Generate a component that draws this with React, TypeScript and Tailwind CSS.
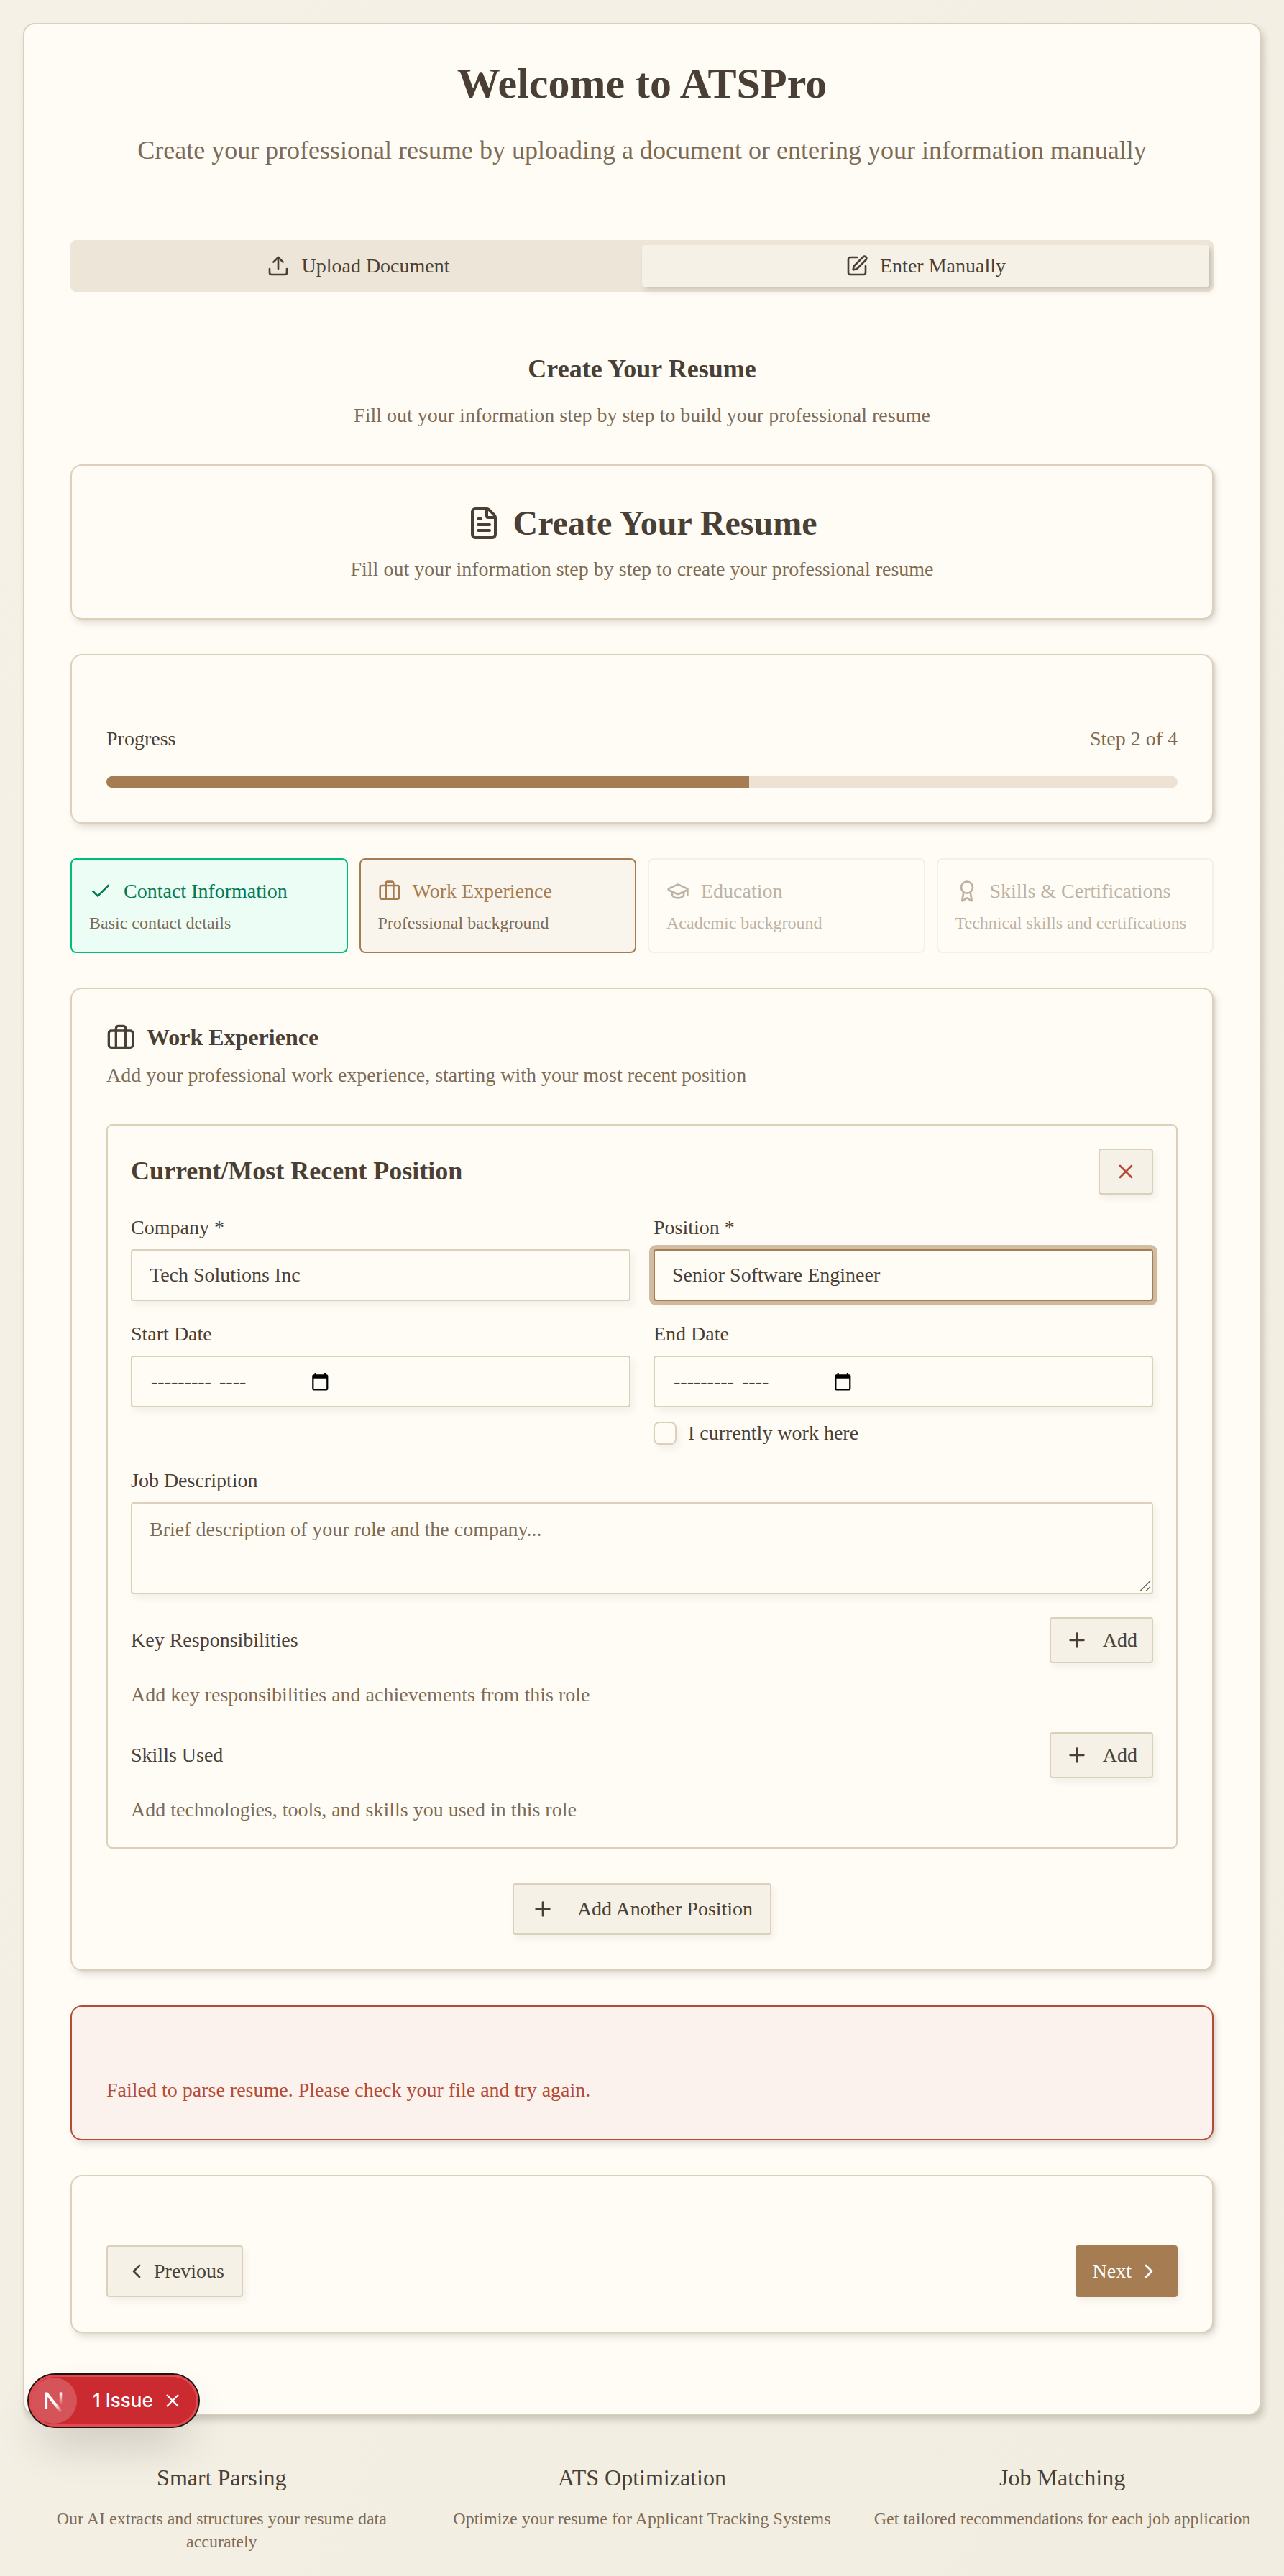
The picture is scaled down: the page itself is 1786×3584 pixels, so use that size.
import React from "react";
import {
  Award,
  Briefcase,
  Check,
  ChevronLeft,
  ChevronRight,
  FileText,
  GraduationCap,
  Plus,
  SquarePen,
  Upload,
  X,
} from "lucide-react";

const shadowXs = "shadow-[4px_6px_10px_0_rgba(58,51,44,0.06)]";
const shadowSm =
  "shadow-[4px_6px_10px_0_rgba(58,51,44,0.12),4px_2px_4px_-2px_rgba(58,51,44,0.12)]";
const shadowLg =
  "shadow-[4px_6px_10px_0_rgba(58,51,44,0.12),4px_8px_12px_-2px_rgba(58,51,44,0.12)]";

function Card({ className, children }: { className: string; children: React.ReactNode }) {
  return (
    <section className={`rounded-[16px] border-2 px-12 pb-12 ${shadowSm} ${className}`}>
      {children}
    </section>
  );
}

const plainCard = "border-[#dbd0ba] bg-[#fffcf5]";
const outlineButton = `flex items-center rounded-[4px] border-2 border-[#dbd0ba] bg-[#f5f1e6] ${shadowXs}`;
const fieldBox = `h-[72px] rounded-[4px] border-2 bg-[#fffcf5] px-6 flex items-center ${shadowXs}`;

function Label({ children }: { children: React.ReactNode }) {
  return <div className="text-[28px] leading-none">{children}</div>;
}

function MonthField() {
  return (
    <div className={`${fieldBox} border-[#dbd0ba]`}>
      <span className="ml-0.5 w-[95px] whitespace-nowrap">---------</span>
      <span className="w-[127px]">----</span>
      <svg viewBox="0 0 24 24" className="size-[26.6px] fill-black">
        <path d="M20 3h-1V1h-2v2H7V1H5v2H4c-1.1 0-2 .9-2 2v16c0 1.1.9 2 2 2h16c1.1 0 2-.9 2-2V5c0-1.1-.9-2-2-2zm0 18H4V8h16v13z" />
      </svg>
    </div>
  );
}

function AddRow({ title, hint }: { title: string; hint: string }) {
  return (
    <div>
      <div className="flex items-center justify-between">
        <Label>{title}</Label>
        <button className={`${outlineButton} h-16 gap-5 px-5`}>
          <Plus className="size-8" />
          Add
        </button>
      </div>
      <p className="mt-6 text-[#7d6b56]">{hint}</p>
    </div>
  );
}

const steps = [
  {
    title: "Contact Information",
    text: "Basic contact details",
    Icon: Check,
    box: "border-emerald-500 bg-emerald-50",
    tone: "text-emerald-700",
  },
  {
    title: "Work Experience",
    text: "Professional background",
    Icon: Briefcase,
    box: "border-[#a67c52] bg-[#a67c52]/5",
    tone: "text-[#a67c52]",
  },
  {
    title: "Education",
    text: "Academic background",
    Icon: GraduationCap,
    box: "border-[#ece5d8] opacity-50",
    tone: "text-[#7d6b56]",
  },
  {
    title: "Skills & Certifications",
    text: "Technical skills and certifications",
    Icon: Award,
    box: "border-[#ece5d8] opacity-50",
    tone: "text-[#7d6b56]",
  },
];

const features = [
  { title: "Smart Parsing", text: "Our AI extracts and structures your resume data accurately" },
  { title: "ATS Optimization", text: "Optimize your resume for Applicant Tracking Systems" },
  { title: "Job Matching", text: "Get tailored recommendations for each job application" },
];

function IssueBadge() {
  return (
    <div className="absolute left-10 top-[3304px] flex h-[72px] w-[236px] items-center rounded-full border-[3px] border-[#e5484d] bg-[#ca2a30] font-['Inter',sans-serif] text-white shadow-[0_0_0_2px_#171717,0_32px_64px_-16px_rgba(0,0,0,0.24)]">
      <div className="flex size-16 shrink-0 items-center justify-center rounded-full bg-white/20">
        <svg viewBox="0 0 26 30" className="mt-1 h-[30px] w-[26px]" fill="none">
          <defs>
            <linearGradient id="diag" x1="15" y1="18" x2="24" y2="29" gradientUnits="userSpaceOnUse">
              <stop stopColor="#fff" />
              <stop offset="1" stopColor="#fff" stopOpacity="0" />
            </linearGradient>
            <linearGradient id="stem" x1="0" y1="2" x2="0" y2="19" gradientUnits="userSpaceOnUse">
              <stop stopColor="#fff" />
              <stop offset="1" stopColor="#fff" stopOpacity="0" />
            </linearGradient>
          </defs>
          <path d="M2.5 1.5v23" stroke="#fff" strokeWidth="3.2" />
          <path d="M2.5 2.5l21 26.5" stroke="url(#diag)" strokeWidth="4" />
          <path d="M22.5 1.5v17" stroke="url(#stem)" strokeWidth="3.4" />
        </svg>
      </div>
      <span className="ml-[22px] w-[84px] whitespace-nowrap text-[26px] font-medium leading-none">1 Issue</span>
      <svg viewBox="0 0 18 18" className="ml-[18px] size-[18px] shrink-0" fill="none" stroke="#fff" strokeWidth="2.4">
        <path d="M1 1l16 16M17 1L1 17" />
      </svg>
    </div>
  );
}

export default function App() {
  return (
    <div className="relative h-[3584px] w-[1786px] overflow-hidden bg-gradient-to-br from-[#f5f1e6] to-[#f2ede1] p-8 font-['Liberation_Serif',serif] text-[28px] leading-[40px] text-[#4a3f35]">
      <main className={`h-[3328px] rounded-[16px] border-2 border-[#dbd0ba] bg-[#fffcf5] px-16 pt-[46px] ${shadowLg}`}>
        <header className="h-[254px] text-center">
          <h1 className="text-[60px] font-bold leading-[72px]">Welcome to ATSPro</h1>
          <p className="mt-[29px] text-[36px] leading-[56px] text-[#7d6b56]">
            Create your professional resume by uploading a document or entering your information manually
          </p>
        </header>

        <div className="grid h-[72px] grid-cols-2 items-center rounded-[8px] bg-[#ece5d8] p-1.5">
          <div className="flex h-[58px] items-center justify-center gap-4">
            <Upload className="size-8" />
            Upload Document
          </div>
          <div className={`flex h-[58px] items-center justify-center gap-4 rounded-[4px] bg-[#f5f1e6] ${shadowSm}`}>
            <SquarePen className="size-8" />
            Enter Manually
          </div>
        </div>

        <div className="mt-[79px] text-center">
          <h2 className="text-[36px] font-bold leading-[56px]">Create Your Resume</h2>
          <p className="mt-[17px] text-[#7d6b56]">
            Fill out your information step by step to build your professional resume
          </p>
        </div>

        <div className="mt-12 flex flex-col gap-12">
          <Card className={`${plainCard} pt-12 text-center`}>
            <h2 className="flex items-center justify-center gap-4 text-[48px] font-bold leading-[64px]">
              <FileText className="size-12" />
              Create Your Resume
            </h2>
            <p className="mt-3 text-[#7d6b56]">
              Fill out your information step by step to create your professional resume
            </p>
          </Card>

          <Card className={`${plainCard} pt-24`}>
            <div className="flex justify-between">
              <span>Progress</span>
              <span className="text-[#7d6b56]">Step 2 of 4</span>
            </div>
            <div className="mt-8 h-4 overflow-hidden rounded-[8px] bg-[#a67c52]/20">
              <div className="h-full w-[60%] bg-[#a67c52]" />
            </div>
          </Card>

          <div className="grid grid-cols-4 gap-4">
            {steps.map(({ title, text, Icon, box, tone }) => (
              <div key={title} className={`rounded-[8px] border-2 p-6 ${box}`}>
                <div className={`flex items-center gap-4 whitespace-nowrap ${tone}`}>
                  <Icon className="size-8" />
                  {title}
                </div>
                <p className="mt-2 whitespace-nowrap text-[24px] leading-[32px] text-[#7d6b56]">{text}</p>
              </div>
            ))}
          </div>

          <Card className={`${plainCard} pt-12`}>
            <h2 className="flex items-center gap-4 text-[32px] font-bold leading-none">
              <Briefcase className="size-10" />
              <span className="pb-0.5">Work Experience</span>
            </h2>
            <p className="mt-3 text-[#7d6b56]">
              Add your professional work experience, starting with your most recent position
            </p>

            <div className="mt-12 flex flex-col gap-8 rounded-[8px] border-2 border-[#dbd0ba] p-8">
              <div className="flex items-center justify-between">
                <h3 className="pb-0.5 text-[36px] font-bold">Current/Most Recent Position</h3>
                <button className={`${outlineButton} h-16 px-5 text-[#b54a35]`}>
                  <X className="size-8" />
                </button>
              </div>

              <div className="grid grid-cols-2 gap-8">
                <div className="flex flex-col gap-4">
                  <Label>Company *</Label>
                  <div className={`${fieldBox} border-[#dbd0ba]`}>Tech Solutions Inc</div>
                </div>
                <div className="flex flex-col gap-4">
                  <Label>Position *</Label>
                  <div className="flex h-[72px] items-center rounded-[4px] border-2 border-[#a67c52] bg-[#fffcf5] px-6 shadow-[0_0_0_6px_rgba(166,124,82,0.5),4px_6px_10px_0_rgba(58,51,44,0.06)]">
                    Senior Software Engineer
                  </div>
                </div>
                <div className="flex flex-col gap-4">
                  <Label>Start Date</Label>
                  <MonthField />
                </div>
                <div className="flex flex-col gap-4">
                  <Label>End Date</Label>
                  <MonthField />
                  <div className="flex h-10 items-center gap-4">
                    <span className={`size-8 rounded-[8px] border-2 border-[#dbd0ba] bg-[#fffcf5] ${shadowXs}`} />
                    I currently work here
                  </div>
                </div>
              </div>

              <div className="flex flex-col gap-4">
                <Label>Job Description</Label>
                <div
                  className={`relative h-32 rounded-[4px] border-2 border-[#dbd0ba] bg-[#fffcf5] px-6 py-4 text-[#7d6b56] ${shadowXs}`}
                >
                  Brief description of your role and the company...
                  <svg
                    viewBox="0 0 16 16"
                    className="absolute bottom-0.5 right-px size-4"
                    fill="none"
                    stroke="#6b6862"
                    strokeWidth="1.5"
                  >
                    <path d="M1 15.5L15 1.5M9 15.5L15 9.5" />
                  </svg>
                </div>
              </div>

              <AddRow title="Key Responsibilities" hint="Add key responsibilities and achievements from this role" />
              <AddRow title="Skills Used" hint="Add technologies, tools, and skills you used in this role" />
            </div>

            <div className="mt-12 flex justify-center">
              <button className={`${outlineButton} h-[72px] gap-8 px-6`}>
                <Plus className="size-8" />
                Add Another Position
              </button>
            </div>
          </Card>

          <Card className="border-[#b54a35] bg-[#fbf2ed] pt-24 text-[#b54a35]">
            Failed to parse resume. Please check your file and try again.
          </Card>

          <Card className={`${plainCard} pt-24`}>
            <div className="flex justify-between">
              <button className={`${outlineButton} h-[72px] gap-2 px-6`}>
                <ChevronLeft className="size-8" />
                Previous
              </button>
              <button className={`flex h-[72px] items-center gap-2 rounded-[4px] bg-[#a67c52] px-6 text-white ${shadowXs}`}>
                Next
                <ChevronRight className="size-8" />
              </button>
            </div>
          </Card>
        </div>
      </main>

      <footer className="mt-[63px] grid grid-cols-3 gap-8 text-center">
        {features.map((f) => (
          <div key={f.title}>
            <h3 className="text-[32px] leading-[48px]">{f.title}</h3>
            <p className="mt-[17px] text-[24px] leading-[32px] text-[#7d6b56]">{f.text}</p>
          </div>
        ))}
      </footer>

      <IssueBadge />
    </div>
  );
}
